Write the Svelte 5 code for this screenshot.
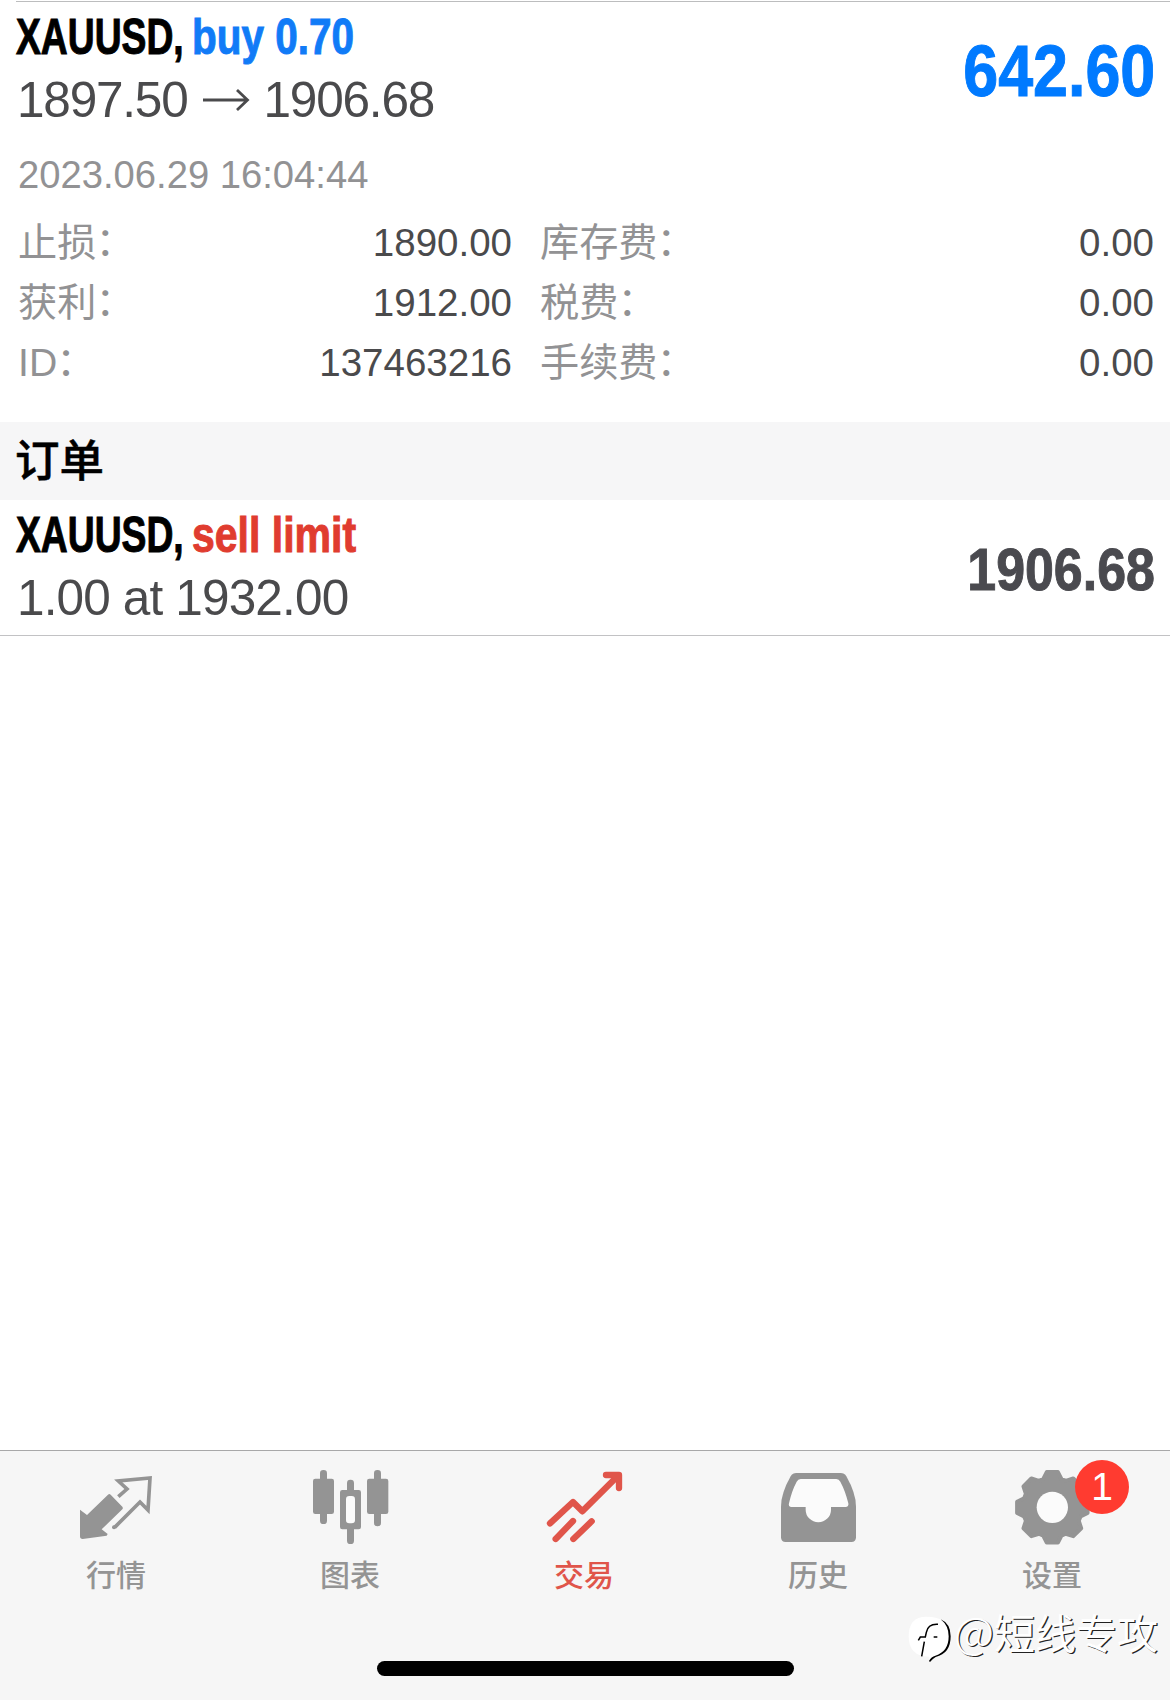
<script>
	const details = [
		{ label: '止损', value: '1890.00' },
		{ label: '库存费', value: '0.00' },
		{ label: '获利', value: '1912.00' },
		{ label: '税费', value: '0.00' },
		{ label: 'ID', value: '137463216' },
		{ label: '手续费', value: '0.00' }
	];

	const tabs = [
		{ id: 'quotes', title: '行情' },
		{ id: 'chart', title: '图表' },
		{ id: 'trade', title: '交易' },
		{ id: 'history', title: '历史' },
		{ id: 'settings', title: '设置', badge: 1 }
	];

	let active = $state('trade');

	// eight teeth around the centre of the gear
	function gear(cx, cy) {
		const pts = [];
		for (let i = 0; i < 8; i++) {
			for (const [deg, r] of [[-18, 89], [-9, 107], [9, 107], [18, 89]]) {
				const a = ((i * 45 + deg) * Math.PI) / 180;
				pts.push(`${(cx + r * Math.sin(a)).toFixed(1)} ${(cy - r * Math.cos(a)).toFixed(1)}`);
			}
		}
		return 'M' + pts.join('L') + 'Z';
	}
</script>

{#snippet title(symbol, action, side)}
	<h3>
		<span class="symbol"><span>{symbol},</span></span>
		<span class={side}>{action}</span>
	</h3>
{/snippet}

<div class="screen">
	<article class="position">
		<div class="summary">
			<div>
				{@render title('XAUUSD', 'buy 0.70', 'buy')}
				<p class="prices">
					<span>1897.50</span>
					<svg width="46" height="24" viewBox="0 0 46 24">
						<path d="M0 12H44M34 2L44.500 12L34 22" fill="none" stroke="currentColor" stroke-width="2.800" />
					</svg>
					<span>1906.68</span>
				</p>
			</div>
			<strong class="profit">642.60</strong>
		</div>
		<p class="time">2023.06.29 16:04:44</p>
		<dl class="details">
			{#each details as row}
				<div>
					<dt>{row.label}<span>：</span></dt>
					<dd>{row.value}</dd>
				</div>
			{/each}
		</dl>
	</article>

	<h2>订单</h2>

	<article class="order">
		<div>
			{@render title('XAUUSD', 'sell limit', 'sell')}
			<p class="prices">1.00 at 1932.00</p>
		</div>
		<strong class="current">1906.68</strong>
	</article>

	<nav>
		<div class="tabs">
			{#each tabs as tab}
				<button class:active={active === tab.id} onclick={() => (active = tab.id)}>
					<span class="icon">
						{#if tab.id === 'quotes'}
							<svg viewBox="51 75 240 240">
								<path fill="currentColor" d="M60 209L81 225L144 164Q148 160 152 164L187 200Q190 204 187 208L125 268L143 282L140 287L68 297Q60 297 60 289Z" />
								<path fill="none" stroke="currentColor" stroke-width="11" d="M175 170L201 147L175 123L270 114L264 210L240 186L164 262" />
								<circle cx="162" cy="262" r="6" fill="currentColor" />
							</svg>
						{:else if tab.id === 'chart'}
							<svg viewBox="753 75 240 240">
								<g fill="currentColor">
									<rect x="780" y="90" width="21" height="162" rx="10" />
									<rect x="759" y="116" width="63" height="106" rx="7" />
									<rect x="942" y="90" width="21" height="169" rx="10" />
									<rect x="921" y="116" width="64" height="106" rx="7" />
									<rect x="861" y="119" width="21" height="193" rx="10" />
									<rect x="840" y="150" width="63" height="118" rx="7" />
								</g>
								<rect x="858" y="168" width="27" height="82" rx="10" fill="#fbfbfb" />
							</svg>
						{:else if tab.id === 'trade'}
							<svg viewBox="75 75 240 240">
								<g fill="none" stroke="currentColor" stroke-width="19" stroke-linecap="round" stroke-linejoin="round">
									<path d="M90 250L159 186L187 214L294 107" />
									<path d="M258 105H297V144" />
									<path d="M107 297L159 243M160 297L215 244" />
								</g>
								<path d="M270 105L297 132V105Z" fill="currentColor" />
							</svg>
						{:else if tab.id === 'history'}
							<svg viewBox="777 75 240 240">
								<path fill="currentColor" d="M829 99H962Q973 99 979 109Q1008 160 1008 200V292Q1008 306 994 306H797Q783 306 783 292V200Q783 160 812 109Q818 99 829 99Z" />
								<path fill="#fbfbfb" d="M842 117H949Q957 117 961 125Q976 153 985 190Q987 201 976 201H933V209A38 38 0 0 1 857 209V201H815Q804 201 807 190Q815 153 830 125Q834 117 842 117Z" />
							</svg>
						{:else}
							<svg viewBox="99 75 240 240">
								<path d={gear(217, 202)} fill="currentColor" stroke="currentColor" stroke-width="12" stroke-linejoin="round" />
								<circle cx="217" cy="202" r="47" fill="#fbfbfb" />
							</svg>
						{/if}
						{#if tab.badge}
							<span class="badge">{tab.badge}</span>
						{/if}
					</span>
					<span class="label">{tab.title}</span>
				</button>
			{/each}
		</div>
		<div class="home"></div>
		<div class="watermark">
			<svg width="46" height="50" viewBox="20 40 138 150">
				<path fill="#fff" d="M75 45Q146 45 146 104Q146 152 102 163Q92 168 84 180V165Q22 165 22 104Q22 45 75 45Z" />
				<path fill="#000" d="M118 53Q148 66 148 104Q148 156 103 166Q95 170 86 181L83 178Q90 165 102 162Q142 150 142 104Q142 72 118 53Z" />
				<path fill="none" stroke="#000" stroke-width="4.500" d="M110 68Q80 66 75 92L72 106H57L51 116M69 120L61 164M97 106H108" />
			</svg>
			<span class="handle"><span>@</span>短线专攻</span>
		</div>
	</nav>
</div>

<style>
	:global(body) {
		background: #fff;
	}
	.screen {
		display: flex;
		flex-direction: column;
		width: 1170px;
		height: 1700px;
		overflow: hidden;
		font-family: "Liberation Sans", "Noto Sans CJK SC", sans-serif;
		color: #4a4a4c;
	}
	p, h2, h3, dl, dd {
		margin: 0;
	}
	svg {
		display: block;
		overflow: visible;
	}
	.position {
		box-sizing: border-box;
		height: 422px;
		padding: 1px 16px 0;
	}
	.summary {
		display: flex;
		justify-content: space-between;
		height: 128px;
		border-top: 1px solid #bcbdbe;
		margin-right: -16px;
		padding-right: 15px;
	}
	/* the bold face is squeezed to a condensed width */
	h3 {
		display: flex;
		height: 68px;
		line-height: 70px;
		font-size: 50px;
		color: #000;
		white-space: nowrap;
	}
	.symbol {
		width: 176px;
	}
	.symbol span, .buy, .sell, .profit, .current {
		display: inline-block;
		transform: scaleX(0.745);
		transform-origin: left;
		-webkit-text-stroke: 1px currentColor;
	}
	.buy {
		color: #117bf7;
		transform: scaleX(0.81);
	}
	.sell {
		color: #e03c2f;
		transform: scaleX(0.82);
	}
	.prices {
		display: flex;
		align-items: center;
		height: 60px;
		padding-left: 1px;
		line-height: 60px;
		font-size: 49.500px;
		letter-spacing: -1.200px;
		white-space: pre;
	}
	.prices svg {
		margin: -1px 15px 0 15px;
	}
	.order .prices {
		letter-spacing: -0.850px;
	}
	.profit {
		color: #007aff;
		font-size: 73px;
		line-height: 138px;
		transform: scaleX(0.86);
		transform-origin: right;
	}
	.time {
		margin: 20px 0 0 2px;
		line-height: 50px;
		font-size: 38.200px;
		color: #929294;
	}
	.details {
		display: grid;
		grid-template-columns: 494px 614px;
		column-gap: 28px;
		margin: 13px 0 0 2px;
		font-size: 38.500px;
		line-height: 60px;
	}
	.details div {
		display: flex;
		justify-content: space-between;
		height: 60px;
	}
	dt {
		color: #929294;
		font-size: 39.200px;
	}
	dt span {
		vertical-align: 1px;
		line-height: 1;
		margin-left: -1px;
	}
	h2 {
		height: 78px;
		padding-left: 15px;
		background: #f6f6f7;
		color: #000;
		font-size: 44.500px;
		font-weight: 500;
		line-height: 80px;
		-webkit-text-stroke: 0.500px #000;
	}
	.order {
		display: flex;
		justify-content: space-between;
		height: 135px;
		padding: 0 15px 0 16px;
		border-bottom: 1px solid #c2c2c4;
	}
	.current {
		color: #4a4a4f;
		font-size: 60px;
		line-height: 139px;
		transform: scaleX(0.865);
		transform-origin: right;
	}
	nav {
		position: relative;
		box-sizing: border-box;
		height: 250px;
		margin-top: auto;
		border-top: 1px solid #a8a8a9;
		background: #f6f6f6;
	}
	.tabs {
		display: grid;
		grid-template-columns: repeat(5, 1fr);
	}
	button {
		display: flex;
		flex-direction: column;
		align-items: center;
		padding: 14px 0 0;
		border: 0;
		background: none;
		color: #949494;
		font-family: "Noto Sans CJK SC", sans-serif;
		font-size: 30px;
		cursor: pointer;
	}
	button.active {
		color: #e0554a;
	}
	.icon {
		position: relative;
		width: 80px;
		height: 80px;
	}
	.label {
		margin: 6px 2px 3px 0;
		height: 44px;
		line-height: 44px;
		font-weight: 500;
	}
	.badge {
		position: absolute;
		left: 62px;
		top: -5px;
		width: 54px;
		height: 54px;
		border-radius: 50%;
		background: #ff3b30;
		color: #fff;
		font: 39px/54px "Liberation Sans", sans-serif;
		text-align: center;
	}
	.home {
		width: 417px;
		height: 15px;
		margin: 63px auto 0;
		border-radius: 8px;
		background: #000;
	}
	.watermark {
		position: absolute;
		right: 12px;
		top: 155px;
		display: flex;
		align-items: center;
		color: #fff;
		font-family: "Noto Sans CJK SC", sans-serif;
		font-size: 41px;
		line-height: 58px;
	}
	.watermark svg {
		margin-top: 9px;
	}
	.handle {
		margin-top: -10px;
		height: 58px;
		text-shadow: 1.200px 1.200px 0 #222;
	}
	.handle span {
		font-size: 44px;
		font-weight: 300;
		line-height: 1;
	}
</style>
